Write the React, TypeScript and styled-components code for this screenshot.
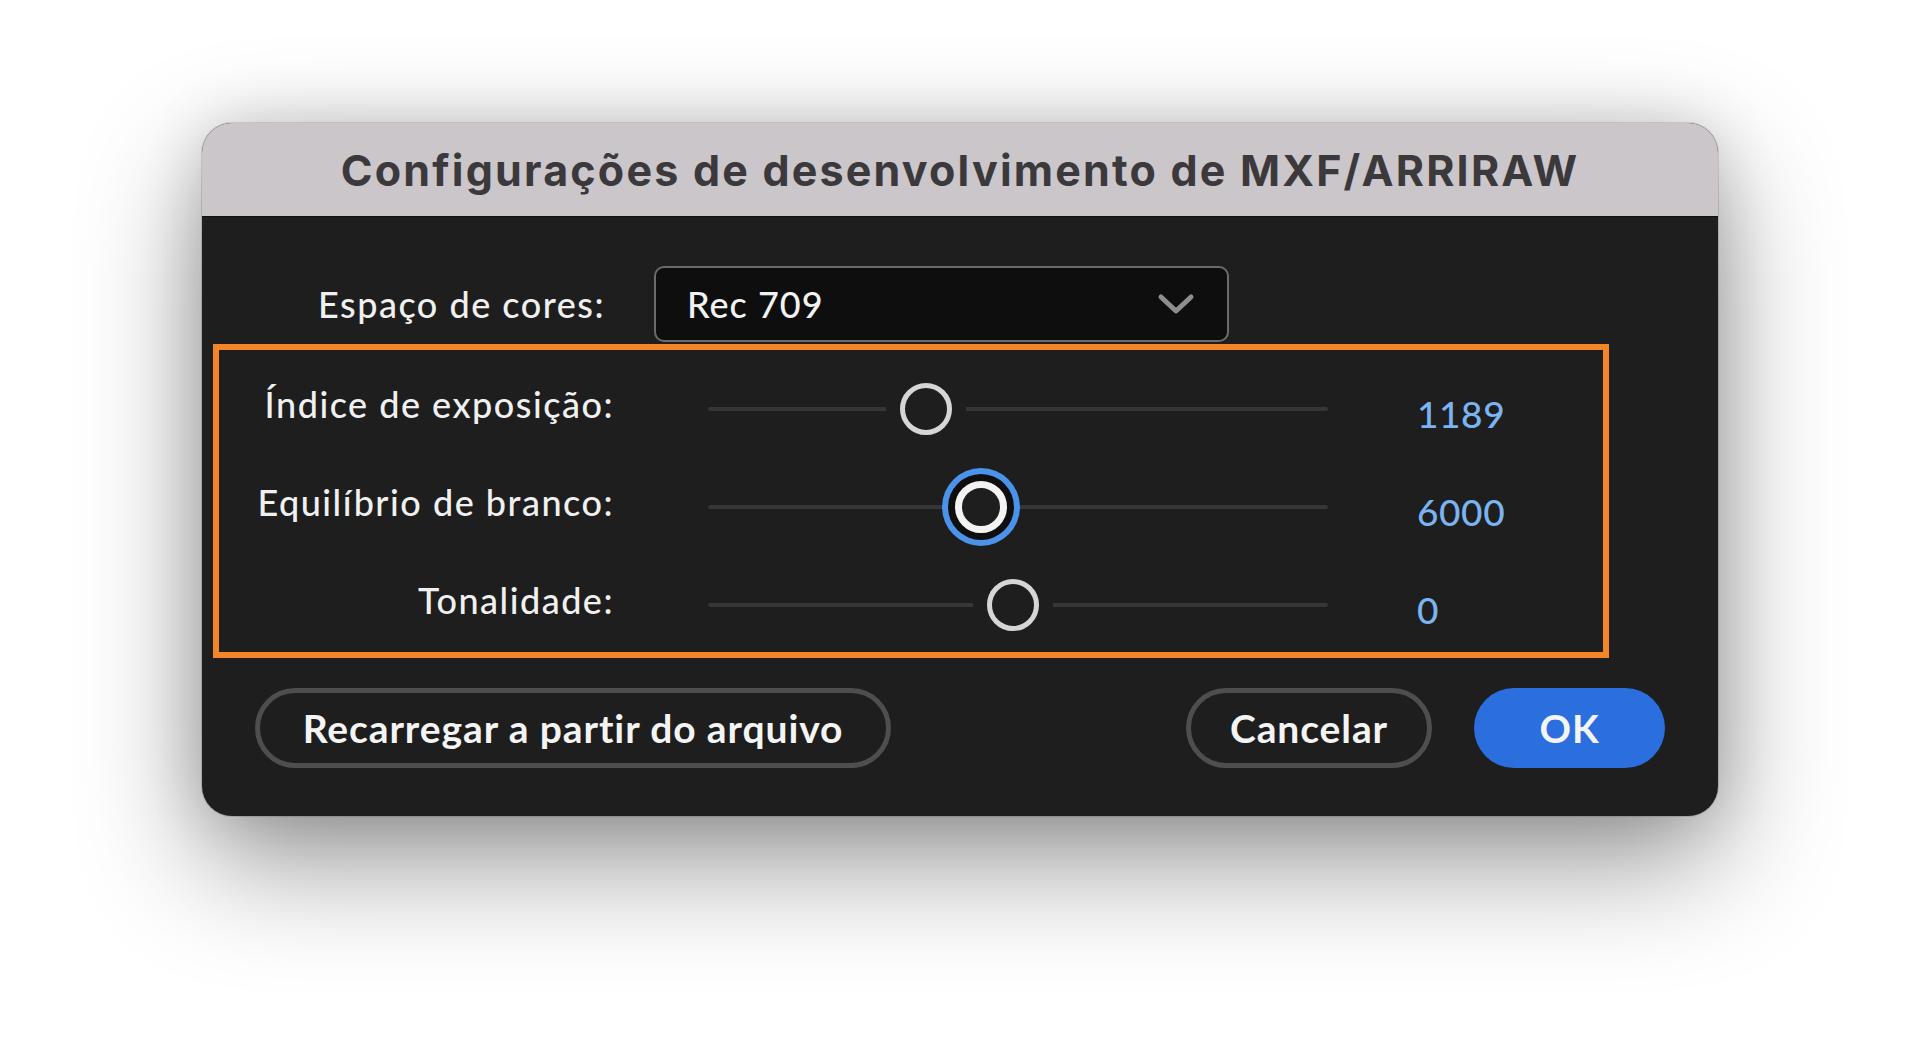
import React from "react";
import styled, { createGlobalStyle, css } from "styled-components";

const GlobalStyles = createGlobalStyle`
  html, body {
    margin: 0;
    padding: 0;
    background: #ffffff;
  }
  body {
    font-family: Lato, "Open Sans", "Liberation Sans", sans-serif;
  }
`;

const Page = styled.div`
  width: 1920px;
  height: 1060px;
  overflow: hidden;
  box-sizing: border-box;
  padding-top: 123px;
  display: flex;
  justify-content: center;
  align-items: flex-start;
`;

const Dialog = styled.div`
  width: 1516px;
  height: 693px;
  border-radius: 30px;
  overflow: hidden;
  background: #1e1e1e;
  display: flex;
  flex-direction: column;
  box-shadow: 0 45px 120px rgba(0, 0, 0, 0.42), 0 0 60px rgba(0, 0, 0, 0.14),
    0 0 0 1px rgba(0, 0, 0, 0.12);
`;

const TitleBar = styled.div`
  height: 93px;
  flex-shrink: 0;
  background: #cac6ca;
  border-bottom: 1px solid #121212;
  display: flex;
  align-items: center;
  justify-content: center;
  font-family: Inter, "Liberation Sans", sans-serif;
  font-weight: 700;
  font-size: 43px;
  letter-spacing: 2.2px;
  color: #3b393c;
`;

const Body = styled.div`
  padding-top: 49px;
  display: flex;
  flex-direction: column;
`;

const ColorRow = styled.div`
  display: grid;
  grid-template-columns: 403px 575px;
  column-gap: 49px;
  align-items: center;
`;

const FieldLabel = styled.div<{ $shift?: number }>`
  text-align: right;
  color: #f0f0f0;
  font-size: 36px;
  font-weight: 500;
  letter-spacing: 1.5px;
  white-space: nowrap;
  padding-bottom: ${(p) => p.$shift ?? 0}px;
`;

const Select = styled.div`
  height: 76px;
  box-sizing: border-box;
  background: #0e0e0e;
  border: 2px solid #6b6b6b;
  border-radius: 10px;
  padding: 0 32px 0 31px;
  display: flex;
  align-items: center;
  justify-content: space-between;
  color: #f2f2f2;
  font-size: 36px;
  font-weight: 500;
  letter-spacing: 1px;
`;

const Highlight = styled.div`
  margin: 2px 0 0 11px;
  width: 1396px;
  height: 314px;
  box-sizing: border-box;
  border: 6px solid #f58628;
  padding-top: 10px;
  display: grid;
  grid-auto-rows: 98px;
`;

const SliderRow = styled.div`
  display: grid;
  grid-template-columns: 395px 630px 1fr;
  column-gap: 84px;
  align-items: center;
`;

const Track = styled.div`
  position: relative;
  margin-left: 10px;
  height: 4px;
  border-radius: 2px;
  background: #363636;
`;

const Thumb = styled.div<{ $focused?: boolean }>`
  position: absolute;
  top: 50%;
  width: 52px;
  height: 52px;
  box-sizing: border-box;
  border-radius: 50%;
  transform: translate(-50%, -50%);
  background: #1e1e1e;
  ${(p) =>
    p.$focused
      ? css`
          border: 7px solid #f3f3f3;
          box-shadow: 0 0 0 7px #0f0f0f, 0 0 0 13px #4a92ea;
        `
      : css`
          border: 5px solid #d6d6d6;
          box-shadow: 0 0 0 14px #1e1e1e;
        `}
`;

const Value = styled.div`
  color: #7ab4f1;
  font-size: 37px;
  font-weight: 500;
  letter-spacing: 0.6px;
  padding: 9px 0 0 5px;
`;

const Footer = styled.div`
  margin-top: 30px;
  padding: 0 53px;
  display: flex;
  align-items: center;
`;

const Button = styled.button<{ $width: number; $primary?: boolean }>`
  width: ${(p) => p.$width}px;
  height: 80px;
  box-sizing: border-box;
  border-radius: 40px;
  font-family: Lato, "Open Sans", sans-serif;
  font-weight: 700;
  font-size: 39px;
  letter-spacing: 0.9px;
  color: #f4f4f4;
  background: ${(p) => (p.$primary ? "#2b6fde" : "transparent")};
  border: ${(p) => (p.$primary ? "none" : "5px solid #4e4e4e")};
  padding: 0;
  cursor: pointer;
`;

const ButtonGroup = styled.div`
  margin-left: auto;
  display: flex;
  gap: 42px;
`;

const Chevron = () => (
  <svg width="38" height="22" viewBox="0 0 38 22">
    <polyline
      points="4,4 19,18 34,4"
      fill="none"
      stroke="#8e8e8e"
      strokeWidth="5"
      strokeLinecap="round"
      strokeLinejoin="round"
    />
  </svg>
);

const sliders = [
  { label: "Índice de exposição:", value: "1189", pos: 35.2, focused: false },
  { label: "Equilíbrio de branco:", value: "6000", pos: 44.0, focused: true },
  { label: "Tonalidade:", value: "0", pos: 49.2, focused: false },
];

const App: React.FC = () => {
  return (
    <>
      <GlobalStyles />
      <Page>
        <Dialog>
          <TitleBar>Configurações de desenvolvimento de MXF/ARRIRAW</TitleBar>
          <Body>
            <ColorRow>
              <FieldLabel $shift={0}>Espaço de cores:</FieldLabel>
              <Select>
                <span>Rec 709</span>
                <Chevron />
              </Select>
            </ColorRow>
            <Highlight>
              {sliders.map((s) => (
                <SliderRow key={s.label}>
                  <FieldLabel $shift={10}>{s.label}</FieldLabel>
                  <Track>
                    <Thumb $focused={s.focused} style={{ left: `${s.pos}%` }} />
                  </Track>
                  <Value>{s.value}</Value>
                </SliderRow>
              ))}
            </Highlight>
            <Footer>
              <Button $width={636}>Recarregar a partir do arquivo</Button>
              <ButtonGroup>
                <Button $width={246}>Cancelar</Button>
                <Button $width={191} $primary>
                  OK
                </Button>
              </ButtonGroup>
            </Footer>
          </Body>
        </Dialog>
      </Page>
    </>
  );
};

export default App;
